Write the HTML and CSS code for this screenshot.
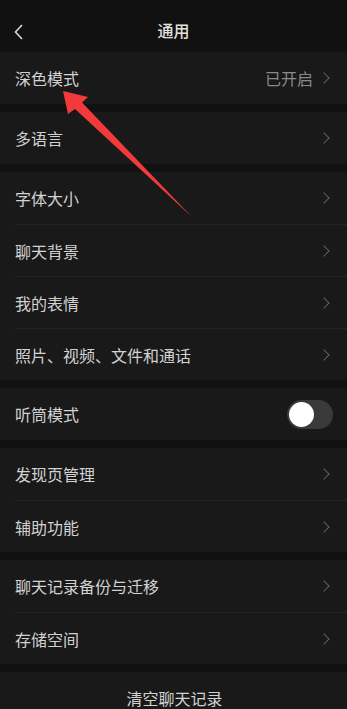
FILE: index.html
```html
<!DOCTYPE html>
<html lang="zh">
<head>
<meta charset="utf-8">
<link rel="stylesheet" href="styles.css">
</head>
<body>
<div class="page">
  <header class="bar">
    <svg class="back" width="12" height="18" viewBox="0 0 12 18"><path d="M9 2 L2.5 9 L9 16" fill="none" stroke="#d8d8d8" stroke-width="1.6"/></svg>
    <div class="title">通用</div>
  </header>

  <section class="group">
    <div class="row"><span class="label">深色模式</span><span class="value">已开启</span><span class="chev"></span></div>
  </section>
  <section class="group">
    <div class="row"><span class="label">多语言</span><span class="chev"></span></div>
  </section>
  <section class="group">
    <div class="row"><span class="label">字体大小</span><span class="chev"></span></div>
    <div class="row"><span class="label">聊天背景</span><span class="chev"></span></div>
    <div class="row"><span class="label">我的表情</span><span class="chev"></span></div>
    <div class="row"><span class="label">照片、视频、文件和通话</span><span class="chev"></span></div>
  </section>
  <section class="group">
    <div class="row"><span class="label">听筒模式</span><span class="toggle"><span class="knob"></span></span></div>
  </section>
  <section class="group">
    <div class="row"><span class="label">发现页管理</span><span class="chev"></span></div>
    <div class="row"><span class="label">辅助功能</span><span class="chev"></span></div>
  </section>
  <section class="group">
    <div class="row"><span class="label">聊天记录备份与迁移</span><span class="chev"></span></div>
    <div class="row"><span class="label">存储空间</span><span class="chev"></span></div>
  </section>
  <section class="group last">
    <div class="row center"><span class="label">清空聊天记录</span></div>
  </section>

  <svg class="arrow" width="347" height="709" viewBox="0 0 347 709">
    <polygon points="63,91 88,97 82,102.5 192,217 75,109 68,114" fill="#f23a3c"/>
  </svg>
</div>
</body>
</html>
```

FILE: styles.css
```css
* { box-sizing: border-box; }
html, body { margin: 0; padding: 0; background: #111111; }
body {
  font-family: "Noto Sans CJK SC", "Noto Sans", sans-serif;
  color: #d2d2d2;
  width: 347px;
  height: 709px;
  overflow: hidden;
}
.page { position: relative; width: 347px; height: 709px; overflow: hidden; }
.bar {
  height: 52px;
  display: flex;
  align-items: center;
  justify-content: center;
  position: relative;
  background: #111111;
}
.back { position: absolute; left: 13px; top: 23px; }
.title { font-size: 16px; color: #e2e2e2; font-weight: 500; padding-top: 8px; }
.group { background: #191919; margin-bottom: 8px; }
.group.last { margin-bottom: 0; }
.row {
  height: 52px;
  display: flex;
  align-items: center;
  margin-left: 15px;
  padding-right: 17px;
  border-top: 1px solid #242424;
  font-size: 16px;
}
.row:first-child { border-top: none; }
.label { flex: 1; color: #d2d2d2; line-height: 1; }
.value { color: #8a8a8a; font-size: 16px; margin-right: 7px; line-height: 1; }
.chev {
  width: 8px; height: 8px;
  border-top: 1.5px solid #5e5e5e;
  border-right: 1.5px solid #5e5e5e;
  transform: rotate(45deg);
  margin-right: 2px;
}
.center { margin-left: 0; padding-right: 0; height: 37px; padding-top: 14px; }
.center .label { text-align: center; margin-right: -2px; line-height: 16px; }
.toggle {
  width: 46px; height: 29px;
  background: #3a3a3a;
  border-radius: 15px;
  padding: 2px;
  display: flex;
  align-items: center;
  margin-right: -3px;
}
.knob { width: 25px; height: 25px; border-radius: 50%; background: #ffffff; }
.arrow { position: absolute; left: 0; top: 0; pointer-events: none; }
```
